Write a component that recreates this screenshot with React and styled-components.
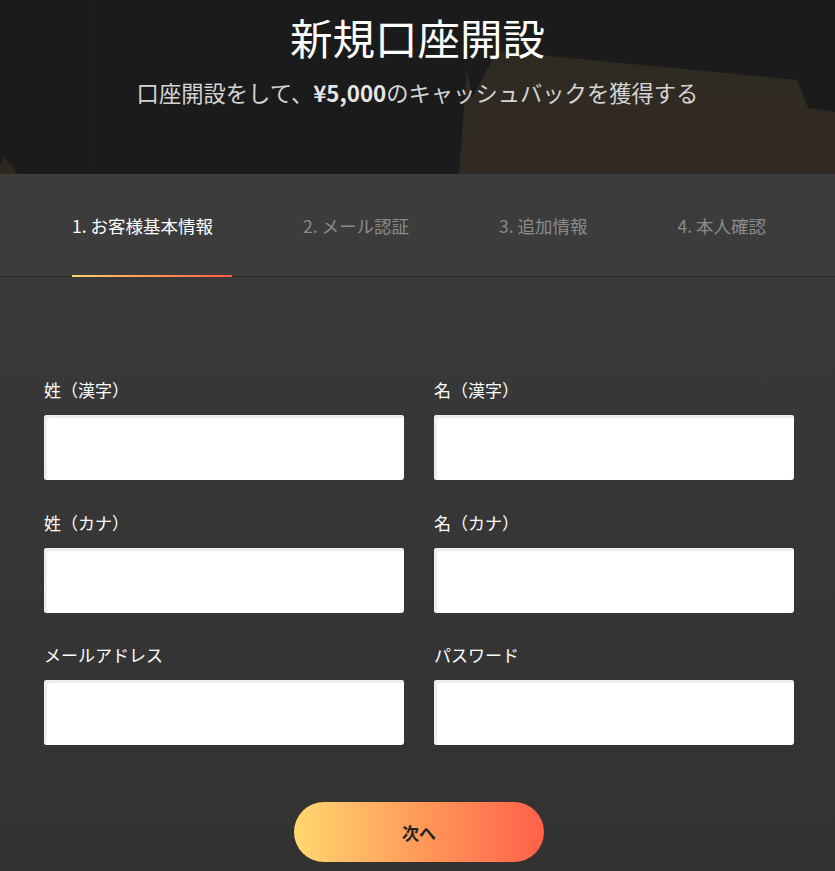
import React from "react";
import styled, { createGlobalStyle } from "styled-components";

const Global = createGlobalStyle`
  html, body { margin: 0; padding: 0; background: #333333; }
  body { font-family: "Noto Sans CJK JP", "Noto Sans", sans-serif; }
  * { box-sizing: border-box; }
`;

const Page = styled.div`
  width: 835px;
  min-height: 871px;
  display: flex;
  flex-direction: column;
  overflow: hidden;
`;

const Hero = styled.header`
  position: relative;
  height: 174px;
  background: #1b1b1b;
  display: flex;
  flex-direction: column;
  align-items: center;
  overflow: hidden;
`;

const HeroArt = styled.svg`
  position: absolute;
  inset: 0;
  width: 100%;
  height: 100%;
`;

const HeroText = styled.div`
  position: relative;
  display: flex;
  flex-direction: column;
  align-items: center;
  padding-top: 9px;
`;

const Title = styled.h1`
  margin: 0;
  font-size: 42.5px;
  line-height: 56px;
  font-weight: 400;
  color: #ffffff;
`;

const Subtitle = styled.p`
  margin: 12px 0 0;
  font-size: 22.3px;
  line-height: 30px;
  color: #d4d4d4;
  strong { font-weight: 700; color: #e6e6e6; }
`;

const Tabs = styled.nav`
  height: 103px;
  background: #3c3c3c;
  border-bottom: 1px solid #2b2b2b;
  display: flex;
  align-items: stretch;
  padding-left: 72px;
  gap: 71px;
`;

const Tab = styled.div`
  position: relative;
  display: flex;
  align-items: center;
  padding-right: 19px;
  font-size: 17.5px;
  color: ${(p) => (p.$active ? "#ffffff" : "#8b8b8b")};
  &::after {
    content: "";
    display: ${(p) => (p.$active ? "block" : "none")};
    position: absolute;
    left: 0;
    right: 0;
    bottom: -1px;
    height: 2px;
    background: linear-gradient(90deg, #ffd26a, #ff5a45);
  }
`;

const Form = styled.form`
  flex: 1;
  background: linear-gradient(#393939, #323232);
  padding: 101px 41px 9px 44px;
  display: flex;
  flex-direction: column;
  align-items: center;
`;

const Grid = styled.div`
  width: 100%;
  display: grid;
  grid-template-columns: 360px 360px;
  column-gap: 30px;
  row-gap: 30.5px;
`;

const Field = styled.label`
  display: flex;
  flex-direction: column;
  gap: 13px;
`;

const LabelText = styled.span`
  font-size: 17px;
  line-height: 24px;
  color: #ffffff;
`;

const Input = styled.input`
  height: 65px;
  width: 100%;
  border: none;
  border-radius: 3px;
  background: #ffffff;
  box-shadow: inset 3px 3px 0 #eeeeee;
  outline: none;
  padding: 0 14px;
  font-size: 16px;
  font-family: inherit;
`;

const Button = styled.button`
  margin-top: 57px;
  width: 250px;
  height: 60px;
  border: none;
  border-radius: 30px;
  background: linear-gradient(90deg, #ffd76e 0%, #ff9a5a 50%, #ff6049 100%);
  font-family: inherit;
  font-size: 17px;
  font-weight: 700;
  color: #222222;
  cursor: pointer;
`;

const fields = [
  { label: "姓（漢字）", type: "text" },
  { label: "名（漢字）", type: "text" },
  { label: "姓（カナ）", type: "text" },
  { label: "名（カナ）", type: "text" },
  { label: "メールアドレス", type: "email" },
  { label: "パスワード", type: "password" },
];

const steps = ["1. お客様基本情報", "2. メール認証", "3. 追加情報", "4. 本人確認"];

export default function App() {
  return (
    <Page>
      <Global />
      <Hero>
        <HeroArt viewBox="0 0 835 174" preserveAspectRatio="none">
          <defs>
            <linearGradient id="sh" x1="0" y1="0" x2="0" y2="1">
              <stop offset="0" stopColor="#2e2a22" />
              <stop offset="1" stopColor="#322a22" />
            </linearGradient>
          </defs>
          <polygon
            points="459,174 467,68 472,98 497,51 797,80 808,108 835,112 835,174"
            fill="url(#sh)"
          />
          <polygon points="0,166 4,157 18,174 0,174" fill="#2c271f" />
          <line x1="89" y1="0" x2="89" y2="174" stroke="#1f1f1f" strokeWidth="1" />
        </HeroArt>
        <HeroText>
          <Title>新規口座開設</Title>
          <Subtitle>
            口座開設をして、<strong>¥5,000</strong>のキャッシュバックを獲得する
          </Subtitle>
        </HeroText>
      </Hero>
      <Tabs>
        {steps.map((s, i) => (
          <Tab key={s} $active={i === 0}>
            {s}
          </Tab>
        ))}
      </Tabs>
      <Form onSubmit={(e) => e.preventDefault()}>
        <Grid>
          {fields.map((f) => (
            <Field key={f.label}>
              <LabelText>{f.label}</LabelText>
              <Input type={f.type} />
            </Field>
          ))}
        </Grid>
        <Button type="submit">次へ</Button>
      </Form>
    </Page>
  );
}
